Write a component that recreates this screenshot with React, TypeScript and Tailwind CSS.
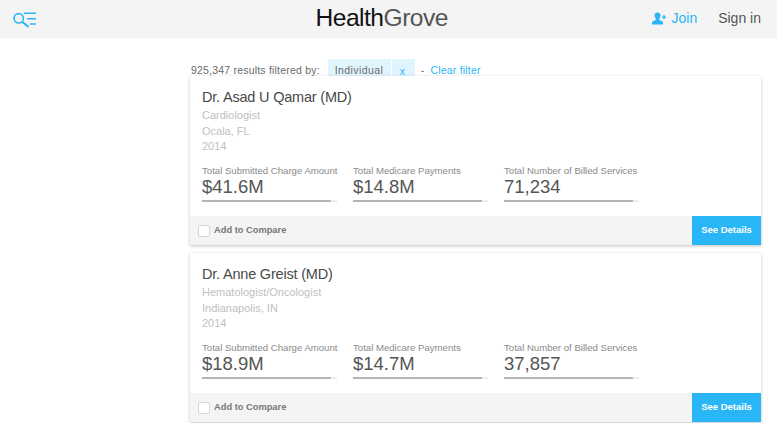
import React from 'react';

const doctors = [
  {
    name: 'Dr. Asad U Qamar (MD)',
    specialty: 'Cardiologist',
    location: 'Ocala, FL',
    year: '2014',
    stats: ['$41.6M', '$14.8M', '71,234'],
  },
  {
    name: 'Dr. Anne Greist (MD)',
    specialty: 'Hematologist/Oncologist',
    location: 'Indianapolis, IN',
    year: '2014',
    stats: ['$18.9M', '$14.7M', '37,857'],
  },
];

const statLabels = ['Total Submitted Charge Amount', 'Total Medicare Payments', 'Total Number of Billed Services'];

const MenuIcon = () => (
  <svg width="24" height="18" viewBox="0 0 24 18" fill="none" stroke="#29b6f6" strokeWidth="1.6">
    <circle cx="5.7" cy="8.3" r="4.7" />
    <path d="M9.5 12 L15.5 17" strokeWidth="2.2" />
    <path d="M11 3.3 H23 M14 8.7 H23 M17 14 H23" />
  </svg>
);

const JoinIcon = () => (
  <svg width="14" height="13" viewBox="0 0 14 13" fill="#29b6f6">
    <path d="M5.5 0.5 C8 0.5 8.8 2.4 8.4 4.2 C8.2 5.4 7.6 6.2 7.2 6.8 L7.4 8 C9 8.6 10.5 9.2 11 10 L11 12.5 L0 12.5 L0 10 C0.6 9.2 2.2 8.6 3.7 8 L3.9 6.8 C3.4 6.2 2.9 5.4 2.7 4.2 C2.3 2.4 3 0.5 5.5 0.5 Z" />
    <path d="M10 4.5 H14 V5.7 H10 Z M11.4 3 H12.6 V7.2 H11.4 Z" />
  </svg>
);

const Card = ({ doctor }: { doctor: (typeof doctors)[number] }) => (
  <div className="bg-white shadow-[0_1px_3px_rgba(0,0,0,0.25)]">
    <div className="pl-3 pt-[12px] h-[140px]">
      <h2 className="text-[14.5px] leading-[18px] text-[#4a4a4a] tracking-[-0.2px]">{doctor.name}</h2>
      <div className="mt-[2px] text-[11px] leading-[15.5px] text-[#c0c0c0]">
        <p>{doctor.specialty}</p>
        <p>{doctor.location}</p>
        <p>{doctor.year}</p>
      </div>
      <div className="flex mt-[9px]">
        {doctor.stats.map((value, i) => (
          <div key={i} className="w-[151px]">
            <p className="text-[9.6px] leading-[13px] text-[#8a8a8a] whitespace-nowrap">{statLabels[i]}</p>
            <p className="text-[18.5px] leading-[19px] text-[#555555]">{value}</p>
            <div className="mt-[4px] w-[135px] h-[2px] bg-[#eeeeee]">
              <div className="w-[129px] h-[2px] bg-[#b4b4b4]" />
            </div>
          </div>
        ))}
      </div>
    </div>
    <div className="flex items-center justify-between h-[29px] bg-[#f4f4f4]">
      <label className="flex items-center pl-[8px] gap-[4px]">
        <span className="w-[12px] h-[12px] bg-white border border-[#d6d6d6] rounded-[2px]" />
        <span className="text-[9.3px] font-bold text-[#777777]">Add to Compare</span>
      </label>
      <button className="w-[69px] h-[29px] bg-[#29b6f6] text-white text-[9.5px] font-bold">See Details</button>
    </div>
  </div>
);

export default function App() {
  return (
    <div className="min-h-screen bg-white font-['Liberation_Sans',Arial,sans-serif] overflow-hidden h-[423px]">
      <header className="flex items-center justify-between h-[38px] bg-[#f4f4f4] pl-[13px] pr-[16px]">
        <MenuIcon />
        <div className="text-[24.6px] leading-[30px] tracking-[-0.5px] ml-[74px] mb-[2px] text-[#111111]">
          Health<span className="text-[#555555]">Grove</span>
        </div>
        <div className="flex items-center text-[14px] mb-[1px]">
          <JoinIcon />
          <span className="ml-[5px] text-[#29b6f6]">Join</span>
          <span className="ml-[21px] text-[#555555]">Sign in</span>
        </div>
      </header>

      <main className="w-[571px] ml-[190px]">
        <div className="flex items-end h-[38px] pl-[1px] text-[10.5px] leading-[12px] tracking-[0.2px] text-[#6b6b6b]">
          <span>925,347 results filtered by:</span>
          <div className="flex ml-[8px] h-[17px]">
            <span className="w-[63px] pl-[7px] pt-[5px] bg-[#e0f4fd] tracking-[0.4px]">Individual</span>
            <span className="w-[23px] ml-[1px] pl-[8px] pt-[6px] bg-[#e0f4fd] text-[#29b6f6]">x</span>
          </div>
          <span className="ml-[6px]">-</span>
          <span className="ml-[6px] text-[#29b6f6]">Clear filter</span>
        </div>
        <div className="flex flex-col gap-[8px]">
          {doctors.map((d) => (
            <Card key={d.name} doctor={d} />
          ))}
        </div>
      </main>
    </div>
  );
}
